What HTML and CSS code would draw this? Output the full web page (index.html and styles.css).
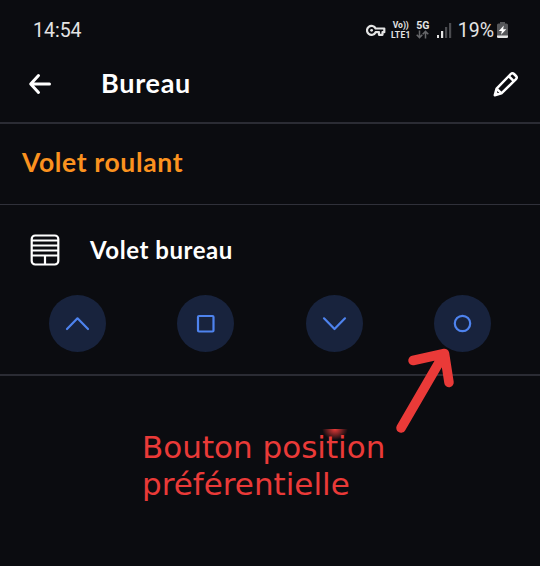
FILE: index.html
```html
<!DOCTYPE html>
<html lang="fr">
<head>
    <meta charset="UTF-8">
    <meta name="viewport" content="width=device-width, initial-scale=1.0">
    <title>Bureau</title>
    <link rel="stylesheet" href="styles.css">
</head>
<body>
    <div class="status-bar">
        <span class="clock">14:54</span>
        <div class="status-icons">
            <svg class="key" width="20" height="13" viewBox="0 0 20 13" fill="none" stroke="#e4e4e4" stroke-width="2.2" stroke-linejoin="round">
                <path d="M9.6 4.5H18.3V8.2H16.5V10.8H13V8.2H9.6A4.5 4.5 0 1 1 9.6 4.5Z"/>
                <circle cx="5.6" cy="6.3" r="1.4" fill="#e4e4e4" stroke="none"/>
            </svg>
            <div class="volte"><span>Vo))</span><span class="lte">LTE1</span></div>
            <div class="network">
                <span>5G</span>
                <svg width="13" height="9" viewBox="0 0 13 9" fill="none" stroke="#66676a" stroke-width="1.5">
                    <path d="M3.5 0.5V7.5M0.7 4.8L3.5 7.6L6.3 4.8M9.5 8.5V1.5M6.7 4.2L9.5 1.4L12.3 4.2"/>
                </svg>
            </div>
            <svg class="signal" width="15" height="15" viewBox="0 0 15 15">
                <path d="M0 12h2v3H0zM4 8h2.2v7H4z" fill="#e4e4e4"/>
                <path d="M8 4h2.2v11H8zM12 0h2.2v15H12z" fill="#4b4c50"/>
            </svg>
            <span class="percent">19%</span>
            <svg class="battery" width="11" height="16" viewBox="0 0 11 16">
                <path d="M3 0h5v1.5h1.5Q11 1.5 11 3v11.5Q11 16 9.5 16h-8Q0 16 0 14.5V3Q0 1.5 1.5 1.5H3z" fill="#56575a"/>
                <path d="M0 13.5h11v1Q11 16 9.5 16h-8Q0 16 0 14.5z" fill="#e4e4e4"/>
                <path d="M6.8 3.5L1.8 9h3l-.7 3.8L9.3 7.2H6.2z" fill="#fff"/>
            </svg>
        </div>
    </div>

    <header class="header">
        <svg class="back" width="24" height="24" viewBox="0 0 24 24" fill="none" stroke="#fff" stroke-width="3" stroke-linecap="round" stroke-linejoin="round">
            <path d="M10.5 3.5L2.7 12L10.5 20.5M3 12H21.5"/>
        </svg>
        <h1 class="title">Bureau</h1>
        <svg class="edit" width="26" height="26" viewBox="0 0 26 26" fill="none" stroke="#fff" stroke-width="2.5" stroke-linejoin="round">
            <path d="M1.8 24.2L3.6 17.6L17.8 3Q19.4 1.4 21 3L23 5Q24.6 6.6 23 8.2L8.4 22.4ZM15.8 5.2L20.8 10.2M3.6 17.6L8.4 22.4"/>
            <path d="M1.8 24.2L2.8 20L6 23.2Z" fill="#fff" stroke="none"/>
        </svg>
    </header>

    <h2 class="category">Volet roulant</h2>

    <section class="device">
        <div class="device-name">
            <svg class="shutter" width="30" height="32" viewBox="0 0 30 32" fill="none" stroke="#fff" stroke-width="2.2">
                <rect x="1.7" y="1.5" width="26.6" height="29" rx="3.5"/>
                <path d="M2 6.5H28M2 11.5H28M2 16.5H28M2 21.5H28M15 21.5V31"/>
            </svg>
            <h3>Volet bureau</h3>
        </div>
        <div class="controls">
            <button class="control" aria-label="Monter">
                <svg width="57" height="57" viewBox="0 0 57 57"><path d="M18 34L28.5 23.3L39 34"/></svg>
            </button>
            <button class="control" aria-label="Stop">
                <svg width="57" height="57" viewBox="0 0 57 57"><rect x="21" y="21" width="15.5" height="15.5" rx="1"/></svg>
            </button>
            <button class="control" aria-label="Descendre">
                <svg width="57" height="57" viewBox="0 0 57 57"><path d="M18 23.3L28.5 34L39 23.3"/></svg>
            </button>
            <button class="control" aria-label="Position préférentielle">
                <svg width="57" height="57" viewBox="0 0 57 57"><circle cx="28.5" cy="28.5" r="7.7"/></svg>
            </button>
        </div>
    </section>

    <p class="note">Bouton position<br>préférentielle</p>

    <!-- Annotation -->
    <span class="smudge"></span>
    <svg class="arrow" width="70" height="100" viewBox="0 0 70 100">
        <path d="M11 88L54 14M23 20.5L54.5 13.5L59 42.5"/>
    </svg>
</body>
</html>
```

FILE: styles.css
```css
* {
    box-sizing: border-box;
}

body {
    position: relative;
    margin: 0;
    height: 566px;
    overflow: hidden;
    background: #0b0c10;
    color: #fff;
    font-family: 'Lato', sans-serif;
}

h1, h2, h3, p {
    margin: 0;
}

/* Barre d'état */
.status-bar {
    display: flex;
    justify-content: space-between;
    align-items: center;
    height: 60px;
    padding: 0 32px 0 33px;
    color: #e4e4e4;
    font-family: 'Roboto', sans-serif;
}

.clock {
    font-size: 19.5px;
}

.status-icons {
    display: flex;
    align-items: center;
}

.volte, .network {
    display: flex;
    flex-direction: column;
    align-items: center;
    font-weight: 700;
    line-height: 9px;
}

.volte {
    width: 20px;
    margin-left: 5px;
    font-size: 8.5px;
    line-height: 10px;
}

.lte {
    letter-spacing: 0.3px;
}

.network {
    width: 14px;
    margin-left: 5px;
    font-size: 10.5px;
}

.signal {
    margin-left: 7px;
}

.percent {
    margin-left: 6px;
    font-size: 19.5px;
}

.battery {
    margin-left: 3px;
}

/* En-tête */
.header {
    display: flex;
    align-items: center;
    height: 64px;
    padding: 0 21px 15px 28px;
    border-bottom: 2px solid #2b2c34;
}

.title {
    flex: 1;
    margin-left: 49px;
    padding-bottom: 3px;
    font-size: 27px;
    line-height: 31px;
    letter-spacing: 0.7px;
}

.category {
    height: 81px;
    padding: 22px 22px 0;
    border-bottom: 1px solid #30313a;
    color: #fb921f;
    font-size: 26.5px;
    line-height: 32px;
    letter-spacing: 0.65px;
}

/* Volet */
.device {
    height: 171px;
    padding-top: 29px;
    border-bottom: 2px solid #2b2c34;
}

.device-name {
    display: flex;
    align-items: center;
    height: 32px;
    padding-left: 30px;
}

.device-name h3 {
    margin-left: 30px;
    font-size: 24px;
    line-height: 32px;
    letter-spacing: 0.55px;
}

.controls {
    display: flex;
    justify-content: space-between;
    padding: 29px 49px 0;
}

.control {
    width: 57px;
    height: 57px;
    padding: 0;
    border: none;
    border-radius: 50%;
    background: #18233d;
}

.control svg {
    display: block;
    fill: none;
    stroke: #4e83ee;
    stroke-width: 2.2;
    stroke-linecap: round;
    stroke-linejoin: round;
}

.note {
    padding: 53px 0 0 142px;
    color: #ea3a38;
    font-family: 'DejaVu Sans', sans-serif;
    font-size: 31px;
    line-height: 37px;
}

/* Annotation */
.smudge {
    position: absolute;
    left: 322px;
    top: 429px;
    width: 26px;
    height: 11px;
    background: radial-gradient(ellipse at top, #ea3a38 0%, transparent 70%);
}

.arrow {
    position: absolute;
    left: 390px;
    top: 340px;
    fill: none;
    stroke: #ea3a38;
    stroke-width: 9.5;
    stroke-linecap: round;
    stroke-linejoin: round;
}
```
